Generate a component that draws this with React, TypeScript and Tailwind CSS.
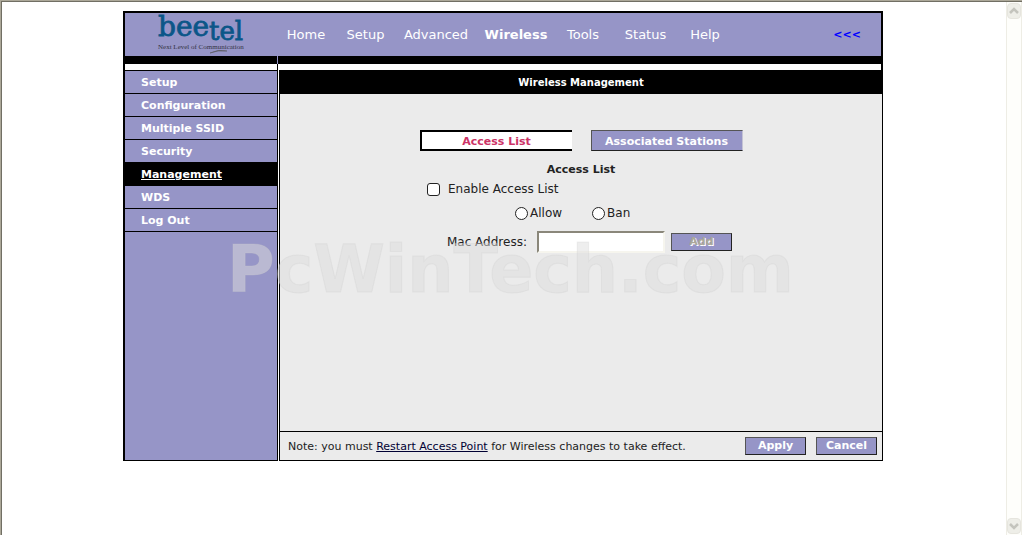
import { useState } from "react";
import clsx from "clsx";

const navItems = [
  { label: "Home", width: "w-[52px]" },
  { label: "Setup", width: "w-[51px]" },
  { label: "Advanced", width: "w-[74px]" },
  { label: "Wireless", width: "w-[70px]" },
  { label: "Tools", width: "w-[48px]" },
  { label: "Status", width: "w-[61px]" },
  { label: "Help", width: "w-[42px]" },
];

const menuItems = ["Setup", "Configuration", "Multiple SSID", "Security", "Management", "WDS", "Log Out"];

function Logo() {
  return (
    <svg viewBox="0 0 90 42" className="h-[42px] w-[90px] overflow-visible" role="img" aria-label="beetel">
      <g fontFamily="'DejaVu Serif', serif" fill="#0b5688" stroke="#0b5688" strokeWidth="0.800">
        <text x="1" y="23" fontSize="28">
          bee
        </text>
        <text x="52" y="27" fontSize="26">
          tel
        </text>
      </g>
      <text x="1" y="36" fontSize="7" fontFamily="'Liberation Serif', serif" fill="#333344">
        Next Level of Communication
      </text>
      <path d="M53 40q8-4 17-2q-10-1-17 2z" fill="#555" stroke="#555" strokeWidth="0.500" />
    </svg>
  );
}

function ScrollBar() {
  return (
    <div className="flex w-4 shrink-0 flex-col justify-between border-x border-[#eeede5] bg-[#fefefb]">
      {["M3 8l4-4 4 4", "M3 4l4 4 4-4"].map((d) => (
        <button
          key={d}
          type="button"
          aria-label={d.startsWith("M3 8") ? "Scroll up" : "Scroll down"}
          className="my-px flex h-4 items-center justify-center rounded-sm border border-[#e6e5de] bg-[#eeeee8]"
        >
          <svg viewBox="0 0 14 12" className="h-3 w-3.5 shrink-0" fill="none" stroke="#c4c4bd" strokeWidth="2.500">
            <path d={d} />
          </svg>
        </button>
      ))}
    </div>
  );
}

export default function App() {
  const [enabled, setEnabled] = useState(false);
  const [mode, setMode] = useState("");
  const [mac, setMac] = useState("");

  const button =
    "border border-t-[#555] border-r-[#222] border-b-[#222] border-l-[#555] bg-[#9695c7] text-[11px] font-bold text-white";

  return (
    <div className="flex min-h-screen border-t border-l border-[#aca899] bg-white font-['Verdana','DejaVu_Sans',sans-serif] text-[#222]">
      <div className="flex flex-1 border-t border-l border-[#716f64]">
        <main className="flex-1 pt-[9px] pr-0.5">
          <div className="relative mx-auto max-w-[760px]">
            <header className="border-2 border-b-0 border-black bg-[#9695c7]">
              <div className="flex h-[43px] items-center">
                <div className="flex w-[153px] justify-center self-start">
                  <Logo />
                </div>
                <nav className="flex gap-2 pl-[2px] text-[13px] leading-4 text-white">
                  {navItems.map((item) => (
                    <a
                      key={item.label}
                      href="#"
                      className={clsx(
                        "text-center whitespace-nowrap",
                        item.width,
                        item.label === "Wireless" && "font-bold",
                      )}
                    >
                      {item.label}
                    </a>
                  ))}
                </nav>
                <a href="#" className="mr-5 ml-auto pt-0.5 text-[11px] font-bold text-[#0000ff]">
                  &lt;&lt;&lt;
                </a>
              </div>
              <div className="flex h-2">
                <div className="w-[152px] bg-black" />
                <div className="ml-px flex-1 bg-black" />
              </div>
              <div className="flex h-1.5 bg-white">
                <div className="w-[153px] border-r border-black" />
              </div>
            </header>

            <div className="flex">
              <aside className="w-[155px] shrink-0 border-t border-r border-b border-l-2 border-black bg-[#9695c7]">
                <ul className="text-[11px] leading-5 font-bold text-white">
                  {menuItems.map((item) => (
                    <li
                      key={item}
                      className={clsx(
                        "border-b border-black pt-0.5 pl-4",
                        item === "Management" && "bg-black underline",
                      )}
                    >
                      <a href="#">{item}</a>
                    </li>
                  ))}
                </ul>
              </aside>

              <section className="ml-px flex flex-1 flex-col border border-t-0 border-black bg-[#ebebeb]">
                <h1 className="bg-black pt-0.5 text-center text-[10px] leading-[22px] font-bold text-white">
                  Wireless Management
                </h1>

                <div className="flex h-[337px] flex-col items-center pt-9">
                  <div className="flex gap-[19px]">
                    <button
                      type="button"
                      className="h-[21px] w-[152px] border-y-2 border-l-2 border-black bg-white pt-0.5 text-[11px] leading-4 font-bold text-[#cc3366]"
                    >
                      Access List
                    </button>
                    <button
                      type="button"
                      className="h-[21px] w-[152px] border border-t-[#555] border-r-[#c4c3d4] border-b-[#222] border-l-[#555] bg-[#9695c7] pt-0.5 text-[11px] leading-4 font-bold text-white"
                    >
                      Associated Stations
                    </button>
                  </div>
                  <h2 className="mt-2.5 text-[11px] leading-[18px] font-bold">Access List</h2>

                  <div className="w-[308px] text-[12px]">
                    <label className="flex items-center gap-2 leading-5">
                      <input
                        type="checkbox"
                        checked={enabled}
                        onChange={(e) => setEnabled(e.target.checked)}
                        className="size-[13px] appearance-none rounded-[3px] border border-[#222] bg-white checked:bg-[#9695c7]"
                      />
                      Enable Access List
                    </label>
                    <div className="mt-1 flex gap-[30px] pl-[88px] leading-5">
                      {["Allow", "Ban"].map((name) => (
                        <label key={name} className="flex items-center gap-0.5">
                          <input
                            type="radio"
                            name="mode"
                            checked={mode === name}
                            onChange={() => setMode(name)}
                            className="size-[13px] appearance-none rounded-full border border-[#222] bg-white checked:border-4"
                          />
                          {name}
                        </label>
                      ))}
                    </div>
                    <div className="mt-2 flex items-center pl-5">
                      <label htmlFor="mac" className="w-[90px] whitespace-nowrap">
                        Mac Address:
                      </label>
                      <input
                        id="mac"
                        type="text"
                        value={mac}
                        onChange={(e) => setMac(e.target.value)}
                        className="h-[22px] w-32 border-2 border-t-[#8a877a] border-r-[#f6f5ee] border-b-[#f6f5ee] border-l-[#8a877a] bg-white px-1"
                      />
                      <button type="button" disabled className={clsx(button, "ml-1.5 h-[18px] w-[61px] leading-4")}>
                        <span className="text-[#aca899] [text-shadow:1px_1px_0_#fff]">Add</span>
                      </button>
                    </div>
                  </div>
                </div>

                <footer className="flex h-[29px] items-center border-t border-black pr-[5px] pl-2">
                  <p className="pt-0.5 text-[11px] whitespace-nowrap">
                    Note: you must{" "}
                    <a href="#" className="text-[#000033] underline">
                      Restart Access Point
                    </a>{" "}
                    for Wireless changes to take effect.
                  </p>
                  <div className="ml-auto flex gap-2.5">
                    <button type="button" className={clsx(button, "h-[18px] w-[61px] leading-4")}>
                      Apply
                    </button>
                    <button type="button" className={clsx(button, "h-[18px] w-[61px] leading-4")}>
                      Cancel
                    </button>
                  </div>
                </footer>
              </section>
            </div>

            <div className="pointer-events-none absolute top-[221px] left-[104px] text-[65px] leading-[76px] font-bold whitespace-nowrap text-[#dddddd]/50 [-webkit-text-stroke:1px_#cccccc40]">
              PcWinTech.com
            </div>
          </div>
        </main>
        <ScrollBar />
      </div>
    </div>
  );
}
